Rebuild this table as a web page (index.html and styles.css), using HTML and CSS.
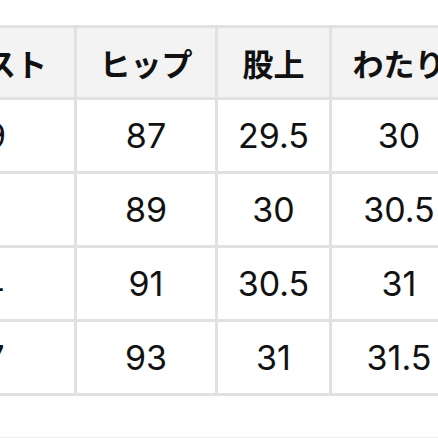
FILE: index.html
```html
<!DOCTYPE html>
<html lang="ja">
<head>
<meta charset="utf-8">
<link rel="stylesheet" href="styles.css">
</head>
<body>
<div class="viewport">
  <div class="size-table">
    <div class="cell head">ウエスト</div>
    <div class="cell head">ヒップ</div>
    <div class="cell head">股上</div>
    <div class="cell head">わたり</div>

    <div class="cell">69</div>
    <div class="cell">87</div>
    <div class="cell">29.5</div>
    <div class="cell">30</div>

    <div class="cell">71</div>
    <div class="cell">89</div>
    <div class="cell">30</div>
    <div class="cell">30.5</div>

    <div class="cell">74</div>
    <div class="cell">91</div>
    <div class="cell">30.5</div>
    <div class="cell">31</div>

    <div class="cell">77</div>
    <div class="cell">93</div>
    <div class="cell">31</div>
    <div class="cell">31.5</div>
  </div>
  <div class="next-block"></div>
</div>
</body>
</html>
```

FILE: styles.css
```css
html, body {
  margin: 0;
  padding: 0;
  background: #ffffff;
}

.viewport {
  width: 438px;
  height: 438px;
  overflow: hidden;
  padding-top: 25px;
  box-sizing: border-box;
}

.size-table {
  display: grid;
  grid-template-columns: 178px 138px 111px 134px;
  grid-template-rows: 69px 71px 71px 71px 71px;
  gap: 3px;
  padding: 3px;
  background: #e1e1e1;
  margin-left: -107px;
  width: max-content;
}

.cell {
  background: #ffffff;
  display: flex;
  align-items: center;
  justify-content: center;
  font-family: Inter, "Noto Sans CJK JP", sans-serif;
  font-size: 34px;
  font-weight: 400;
  color: #111111;
  white-space: nowrap;
}

.cell.head {
  background: #f3f3f3;
  font-family: "Noto Sans CJK JP", sans-serif;
  font-size: 31px;
  font-weight: 700;
}

.next-block {
  margin-top: 41px;
  border-top: 1px solid #efefef;
  height: 10px;
}
```
